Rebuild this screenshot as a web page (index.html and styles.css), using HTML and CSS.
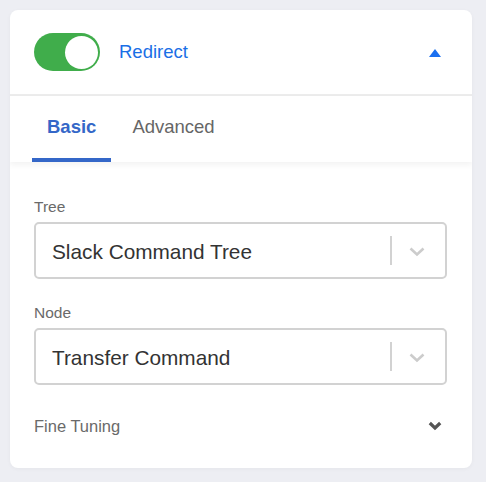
FILE: index.html
```html
<!DOCTYPE html>
<html>
<head>
<meta charset="utf-8">
<link rel="stylesheet" href="styles.css">
</head>
<body>
<div class="card">
  <div class="card-header">
    <div class="toggle"><span class="knob"></span></div>
    <span class="title">Redirect</span>
    <span class="caret-up"></span>
  </div>
  <div class="tabs">
    <div class="tab active">Basic</div>
    <div class="tab">Advanced</div>
  </div>
  <div class="card-body">
    <div class="field">
      <label class="field-label">Tree</label>
      <div class="select">
        <span class="select-value">Slack Command Tree</span>
        <span class="sep"></span>
        <svg class="chev" width="16" height="10" viewBox="0 0 16 10"><path d="M1.5 1.5 L8 7.5 L14.5 1.5" fill="none" stroke="#cccccc" stroke-width="2.6"/></svg>
      </div>
    </div>
    <div class="field">
      <label class="field-label">Node</label>
      <div class="select">
        <span class="select-value">Transfer Command</span>
        <span class="sep"></span>
        <svg class="chev" width="16" height="10" viewBox="0 0 16 10"><path d="M1.5 1.5 L8 7.5 L14.5 1.5" fill="none" stroke="#cccccc" stroke-width="2.6"/></svg>
      </div>
    </div>
    <div class="fine">
      <span class="fine-label">Fine Tuning</span>
      <svg class="chev-dark" width="14" height="10" viewBox="0 0 14 10"><path d="M1.8 2 L7 7 L12.2 2" fill="none" stroke="#555555" stroke-width="3.2"/></svg>
    </div>
  </div>
</div>
</body>
</html>
```
FILE: styles.css
```css
html, body {
  margin: 0;
  padding: 0;
}
body {
  background: #edeef3;
  font-family: "Liberation Sans", Arial, Helvetica, sans-serif;
  padding: 10px;
}
.card {
  width: 462px;
  background: #fff;
  border-radius: 8px;
  box-shadow: 0 1px 4px rgba(0, 0, 0, 0.04);
  overflow: hidden;
}
.card-header {
  height: 84px;
  display: flex;
  align-items: center;
  padding: 0 31px 0 24px;
  border-bottom: 2px solid #ececec;
}
.toggle {
  width: 66px;
  height: 38px;
  box-sizing: border-box;
  border-radius: 19px;
  background: #40ad4b;
  padding: 3px 2px 3px 3px;
  display: flex;
  justify-content: flex-end;
  align-items: center;
}
.knob {
  width: 33px;
  height: 33px;
  border-radius: 50%;
  background: #fff;
}
.title {
  margin-left: 19px;
  font-size: 18.5px;
  color: #1a6fe6;
  flex: 1;
}
.caret-up {
  width: 0;
  height: 0;
  border-left: 6px solid transparent;
  border-right: 6px solid transparent;
  border-bottom: 8px solid #1a6ff0;
  margin-top: 2px;
}
.tabs {
  height: 66px;
  display: flex;
  padding-left: 22px;
  box-shadow: 0 3px 6px rgba(0, 0, 0, 0.05);
  position: relative;
}
.tab {
  display: flex;
  align-items: center;
  padding: 0 15px;
  box-sizing: border-box;
  border-bottom: 4px solid transparent;
  font-size: 18.5px;
  color: #666;
  margin-right: 6px;
}
.tab.active {
  color: #3467c8;
  font-weight: bold;
  border-bottom-color: #3467c8;
}
.card-body {
  padding: 36px 25px 33px 24px;
}
.field {
  margin-bottom: 25px;
}
.field-label {
  display: block;
  font-size: 15.5px;
  line-height: 17px;
  color: #6a6a6a;
  margin-bottom: 7px;
}
.select {
  height: 57px;
  box-sizing: border-box;
  border: 2px solid #d2d2d2;
  border-radius: 5px;
  display: flex;
  align-items: center;
  padding: 2px 20px 0 16px;
}
.select-value {
  flex: 1;
  font-size: 20.8px;
  color: #333;
}
.sep {
  width: 2px;
  height: 29px;
  background: #d2d2d2;
  margin-right: 17px;
  margin-top: -2px;
}
.chev {
  display: block;
  margin-top: 1px;
}
.fine {
  margin-top: 32px;
  display: flex;
  align-items: center;
  justify-content: space-between;
  padding-right: 5px;
}
.fine-label {
  font-size: 16.5px;
  line-height: 18px;
  color: #6a6a6a;
}
.chev-dark {
  display: block;
}
```
